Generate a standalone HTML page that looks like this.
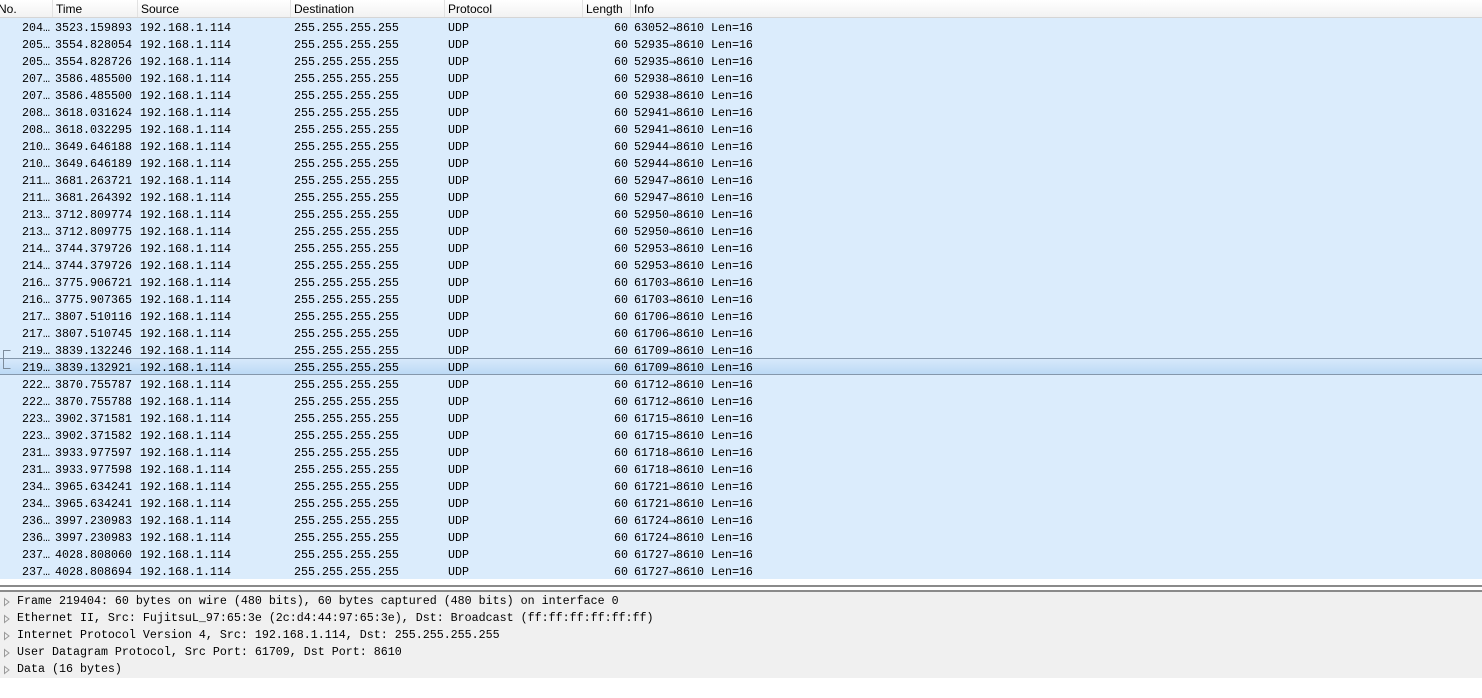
<!DOCTYPE html>
<html><head><meta charset="utf-8"><style>
*{margin:0;padding:0;box-sizing:border-box}
body{width:1482px;height:698px;background:#fff;position:relative;overflow:hidden;font-family:"Liberation Mono",monospace;font-size:11.67px;color:#000}
.hdr{position:absolute;left:0;top:0;width:1482px;height:18px;background:linear-gradient(#fff,#f2f2f2);border-bottom:1px solid #d5d5d5;font-family:"Liberation Sans",sans-serif;font-size:12px}
.hdr span{position:absolute;top:2px}
.hdr i{position:absolute;top:0;width:1px;height:17px;background:#e2e2e2}
.rows{position:absolute;left:0;top:18px;width:1482px}
.r{position:relative;height:17px;background:#dbecfc;white-space:pre}
.r span{position:absolute;top:2px;line-height:17px}
.sel{background:linear-gradient(#d7e9fb,#bcdaf5);border-top:1px solid #8497ab;border-bottom:1px solid #8497ab}
.sel span{top:1px}
.c0{right:1432px}.c1{left:55px}.c2{left:140px}.c3{left:294px}.c4{left:448px}.c5{right:854px}.c6{left:634px}
b{font-weight:normal;font-family:"DejaVu Sans",sans-serif;font-size:9px;display:inline-block;width:7px;text-align:center}
.det{position:absolute;left:0;top:592px;width:1482px;height:86px;background:#f0f0f0}
.d{position:absolute;left:17px;white-space:pre;height:17px;line-height:17px}
.tri{position:absolute;left:3px}
</style></head><body>
<div class="hdr">
<span style="left:-2px">No.</span><i style="left:52px"></i>
<span style="left:56px">Time</span><i style="left:137px"></i>
<span style="left:141px">Source</span><i style="left:290px"></i>
<span style="left:294px">Destination</span><i style="left:444px"></i>
<span style="left:448px">Protocol</span><i style="left:582px"></i>
<span style="left:586px">Length</span><i style="left:630px"></i>
<span style="left:634px">Info</span>
</div>
<div class="rows">
<div class="r"><span class="c0">204…</span><span class="c1">3523.159893</span><span class="c2">192.168.1.114</span><span class="c3">255.255.255.255</span><span class="c4">UDP</span><span class="c5">60</span><span class="c6">63052<b>→</b>8610 Len=16</span></div>
<div class="r"><span class="c0">205…</span><span class="c1">3554.828054</span><span class="c2">192.168.1.114</span><span class="c3">255.255.255.255</span><span class="c4">UDP</span><span class="c5">60</span><span class="c6">52935<b>→</b>8610 Len=16</span></div>
<div class="r"><span class="c0">205…</span><span class="c1">3554.828726</span><span class="c2">192.168.1.114</span><span class="c3">255.255.255.255</span><span class="c4">UDP</span><span class="c5">60</span><span class="c6">52935<b>→</b>8610 Len=16</span></div>
<div class="r"><span class="c0">207…</span><span class="c1">3586.485500</span><span class="c2">192.168.1.114</span><span class="c3">255.255.255.255</span><span class="c4">UDP</span><span class="c5">60</span><span class="c6">52938<b>→</b>8610 Len=16</span></div>
<div class="r"><span class="c0">207…</span><span class="c1">3586.485500</span><span class="c2">192.168.1.114</span><span class="c3">255.255.255.255</span><span class="c4">UDP</span><span class="c5">60</span><span class="c6">52938<b>→</b>8610 Len=16</span></div>
<div class="r"><span class="c0">208…</span><span class="c1">3618.031624</span><span class="c2">192.168.1.114</span><span class="c3">255.255.255.255</span><span class="c4">UDP</span><span class="c5">60</span><span class="c6">52941<b>→</b>8610 Len=16</span></div>
<div class="r"><span class="c0">208…</span><span class="c1">3618.032295</span><span class="c2">192.168.1.114</span><span class="c3">255.255.255.255</span><span class="c4">UDP</span><span class="c5">60</span><span class="c6">52941<b>→</b>8610 Len=16</span></div>
<div class="r"><span class="c0">210…</span><span class="c1">3649.646188</span><span class="c2">192.168.1.114</span><span class="c3">255.255.255.255</span><span class="c4">UDP</span><span class="c5">60</span><span class="c6">52944<b>→</b>8610 Len=16</span></div>
<div class="r"><span class="c0">210…</span><span class="c1">3649.646189</span><span class="c2">192.168.1.114</span><span class="c3">255.255.255.255</span><span class="c4">UDP</span><span class="c5">60</span><span class="c6">52944<b>→</b>8610 Len=16</span></div>
<div class="r"><span class="c0">211…</span><span class="c1">3681.263721</span><span class="c2">192.168.1.114</span><span class="c3">255.255.255.255</span><span class="c4">UDP</span><span class="c5">60</span><span class="c6">52947<b>→</b>8610 Len=16</span></div>
<div class="r"><span class="c0">211…</span><span class="c1">3681.264392</span><span class="c2">192.168.1.114</span><span class="c3">255.255.255.255</span><span class="c4">UDP</span><span class="c5">60</span><span class="c6">52947<b>→</b>8610 Len=16</span></div>
<div class="r"><span class="c0">213…</span><span class="c1">3712.809774</span><span class="c2">192.168.1.114</span><span class="c3">255.255.255.255</span><span class="c4">UDP</span><span class="c5">60</span><span class="c6">52950<b>→</b>8610 Len=16</span></div>
<div class="r"><span class="c0">213…</span><span class="c1">3712.809775</span><span class="c2">192.168.1.114</span><span class="c3">255.255.255.255</span><span class="c4">UDP</span><span class="c5">60</span><span class="c6">52950<b>→</b>8610 Len=16</span></div>
<div class="r"><span class="c0">214…</span><span class="c1">3744.379726</span><span class="c2">192.168.1.114</span><span class="c3">255.255.255.255</span><span class="c4">UDP</span><span class="c5">60</span><span class="c6">52953<b>→</b>8610 Len=16</span></div>
<div class="r"><span class="c0">214…</span><span class="c1">3744.379726</span><span class="c2">192.168.1.114</span><span class="c3">255.255.255.255</span><span class="c4">UDP</span><span class="c5">60</span><span class="c6">52953<b>→</b>8610 Len=16</span></div>
<div class="r"><span class="c0">216…</span><span class="c1">3775.906721</span><span class="c2">192.168.1.114</span><span class="c3">255.255.255.255</span><span class="c4">UDP</span><span class="c5">60</span><span class="c6">61703<b>→</b>8610 Len=16</span></div>
<div class="r"><span class="c0">216…</span><span class="c1">3775.907365</span><span class="c2">192.168.1.114</span><span class="c3">255.255.255.255</span><span class="c4">UDP</span><span class="c5">60</span><span class="c6">61703<b>→</b>8610 Len=16</span></div>
<div class="r"><span class="c0">217…</span><span class="c1">3807.510116</span><span class="c2">192.168.1.114</span><span class="c3">255.255.255.255</span><span class="c4">UDP</span><span class="c5">60</span><span class="c6">61706<b>→</b>8610 Len=16</span></div>
<div class="r"><span class="c0">217…</span><span class="c1">3807.510745</span><span class="c2">192.168.1.114</span><span class="c3">255.255.255.255</span><span class="c4">UDP</span><span class="c5">60</span><span class="c6">61706<b>→</b>8610 Len=16</span></div>
<div class="r"><span class="c0">219…</span><span class="c1">3839.132246</span><span class="c2">192.168.1.114</span><span class="c3">255.255.255.255</span><span class="c4">UDP</span><span class="c5">60</span><span class="c6">61709<b>→</b>8610 Len=16</span></div>
<div class="r sel"><span class="c0">219…</span><span class="c1">3839.132921</span><span class="c2">192.168.1.114</span><span class="c3">255.255.255.255</span><span class="c4">UDP</span><span class="c5">60</span><span class="c6">61709<b>→</b>8610 Len=16</span></div>
<div class="r"><span class="c0">222…</span><span class="c1">3870.755787</span><span class="c2">192.168.1.114</span><span class="c3">255.255.255.255</span><span class="c4">UDP</span><span class="c5">60</span><span class="c6">61712<b>→</b>8610 Len=16</span></div>
<div class="r"><span class="c0">222…</span><span class="c1">3870.755788</span><span class="c2">192.168.1.114</span><span class="c3">255.255.255.255</span><span class="c4">UDP</span><span class="c5">60</span><span class="c6">61712<b>→</b>8610 Len=16</span></div>
<div class="r"><span class="c0">223…</span><span class="c1">3902.371581</span><span class="c2">192.168.1.114</span><span class="c3">255.255.255.255</span><span class="c4">UDP</span><span class="c5">60</span><span class="c6">61715<b>→</b>8610 Len=16</span></div>
<div class="r"><span class="c0">223…</span><span class="c1">3902.371582</span><span class="c2">192.168.1.114</span><span class="c3">255.255.255.255</span><span class="c4">UDP</span><span class="c5">60</span><span class="c6">61715<b>→</b>8610 Len=16</span></div>
<div class="r"><span class="c0">231…</span><span class="c1">3933.977597</span><span class="c2">192.168.1.114</span><span class="c3">255.255.255.255</span><span class="c4">UDP</span><span class="c5">60</span><span class="c6">61718<b>→</b>8610 Len=16</span></div>
<div class="r"><span class="c0">231…</span><span class="c1">3933.977598</span><span class="c2">192.168.1.114</span><span class="c3">255.255.255.255</span><span class="c4">UDP</span><span class="c5">60</span><span class="c6">61718<b>→</b>8610 Len=16</span></div>
<div class="r"><span class="c0">234…</span><span class="c1">3965.634241</span><span class="c2">192.168.1.114</span><span class="c3">255.255.255.255</span><span class="c4">UDP</span><span class="c5">60</span><span class="c6">61721<b>→</b>8610 Len=16</span></div>
<div class="r"><span class="c0">234…</span><span class="c1">3965.634241</span><span class="c2">192.168.1.114</span><span class="c3">255.255.255.255</span><span class="c4">UDP</span><span class="c5">60</span><span class="c6">61721<b>→</b>8610 Len=16</span></div>
<div class="r"><span class="c0">236…</span><span class="c1">3997.230983</span><span class="c2">192.168.1.114</span><span class="c3">255.255.255.255</span><span class="c4">UDP</span><span class="c5">60</span><span class="c6">61724<b>→</b>8610 Len=16</span></div>
<div class="r"><span class="c0">236…</span><span class="c1">3997.230983</span><span class="c2">192.168.1.114</span><span class="c3">255.255.255.255</span><span class="c4">UDP</span><span class="c5">60</span><span class="c6">61724<b>→</b>8610 Len=16</span></div>
<div class="r"><span class="c0">237…</span><span class="c1">4028.808060</span><span class="c2">192.168.1.114</span><span class="c3">255.255.255.255</span><span class="c4">UDP</span><span class="c5">60</span><span class="c6">61727<b>→</b>8610 Len=16</span></div>
<div class="r"><span class="c0">237…</span><span class="c1">4028.808694</span><span class="c2">192.168.1.114</span><span class="c3">255.255.255.255</span><span class="c4">UDP</span><span class="c5">60</span><span class="c6">61727<b>→</b>8610 Len=16</span></div>
</div>
<svg style="position:absolute;left:0;top:345px" width="14" height="30"><path d="M10.5 5.5H3.5V23.5H10.5" fill="none" stroke="#7d8c9b" stroke-width="1"/></svg>
<div style="position:absolute;left:0;top:585px;width:1482px;height:2px;background:#8a8a8a"></div>
<div style="position:absolute;left:0;top:590px;width:1482px;height:2px;background:#8a8a8a"></div>
<div class="det">
<div class="d" style="top:1px">Frame 219404: 60 bytes on wire (480 bits), 60 bytes captured (480 bits) on interface 0</div>
<div class="d" style="top:18px">Ethernet II, Src: FujitsuL_97:65:3e (2c:d4:44:97:65:3e), Dst: Broadcast (ff:ff:ff:ff:ff:ff)</div>
<div class="d" style="top:35px">Internet Protocol Version 4, Src: 192.168.1.114, Dst: 255.255.255.255</div>
<div class="d" style="top:52px">User Datagram Protocol, Src Port: 61709, Dst Port: 8610</div>
<div class="d" style="top:69px">Data (16 bytes)</div>
<svg class="tri" style="top:5px" width="8" height="10"><path d="M1.5 1.5L6 5L1.5 8.5Z" fill="none" stroke="#9a9a9a"/></svg>
<svg class="tri" style="top:22px" width="8" height="10"><path d="M1.5 1.5L6 5L1.5 8.5Z" fill="none" stroke="#9a9a9a"/></svg>
<svg class="tri" style="top:39px" width="8" height="10"><path d="M1.5 1.5L6 5L1.5 8.5Z" fill="none" stroke="#9a9a9a"/></svg>
<svg class="tri" style="top:56px" width="8" height="10"><path d="M1.5 1.5L6 5L1.5 8.5Z" fill="none" stroke="#9a9a9a"/></svg>
<svg class="tri" style="top:73px" width="8" height="10"><path d="M1.5 1.5L6 5L1.5 8.5Z" fill="none" stroke="#9a9a9a"/></svg>
</div>
</body></html>
